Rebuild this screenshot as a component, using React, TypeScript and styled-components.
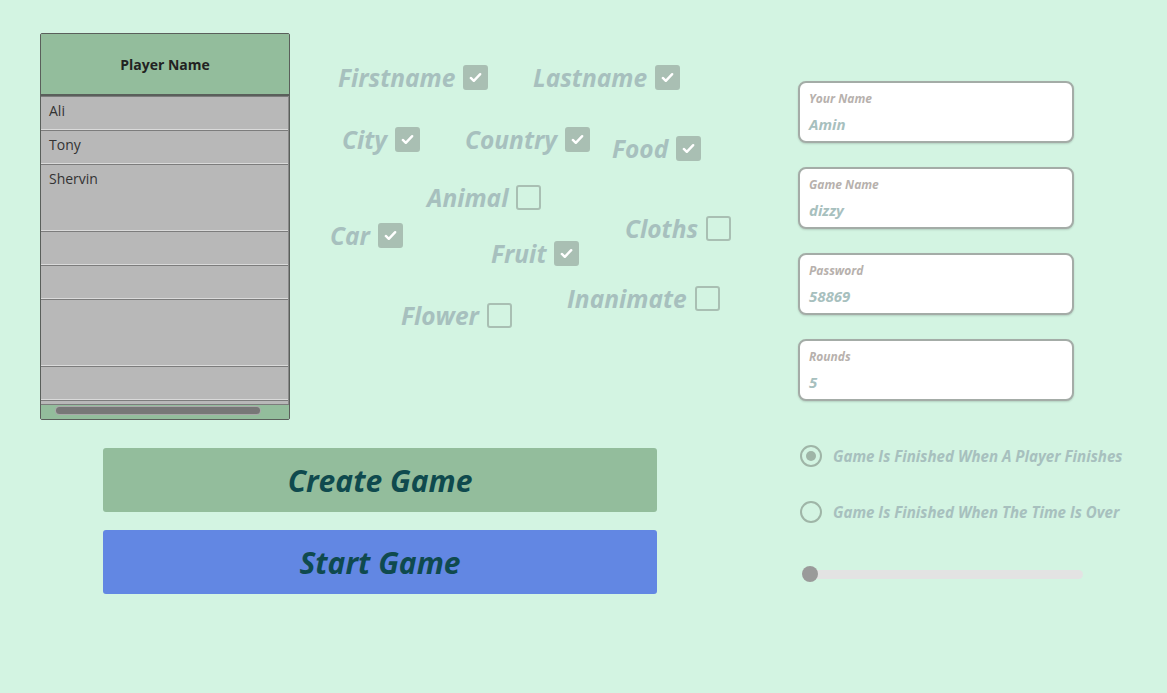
import React from 'react';
import styled, { createGlobalStyle } from 'styled-components';

const GlobalStyle = createGlobalStyle`
  html, body {
    margin: 0;
    padding: 0;
    background: #d3f4e2;
    font-family: "Open Sans", "Noto Sans", sans-serif;
  }
  * { box-sizing: border-box; }
`;

const Page = styled.div`
  display: flex;
  width: 1167px;
  height: 693px;
  padding: 33px 0 0 40px;
  background: #d3f4e2;
  overflow: hidden;
`;

const Main = styled.div`
  display: flex;
  flex-direction: column;
  width: 758px;
`;

const TopRow = styled.div`
  display: flex;
  height: 387px;
`;

/* ---- player table ---- */

const Table = styled.div`
  display: flex;
  flex-direction: column;
  width: 250px;
  height: 387px;
  border: 1px solid #5a5f5b;
  border-radius: 2px;
  background: #b8b8b8;
  overflow: hidden;
`;

const TableHeader = styled.div`
  height: 62px;
  flex-shrink: 0;
  display: flex;
  align-items: center;
  justify-content: center;
  background: #93bd9c;
  border-bottom: 2px solid #5a5f5b;
  font-size: 14px;
  font-weight: 700;
  color: #222;
`;

const TableBody = styled.div`
  flex: 1;
  overflow: hidden;
  border-right: 1px solid #8a8a8a;
`;

const Row = styled.div<{ $tall?: boolean }>`
  height: ${p => (p.$tall ? 67 : 34)}px;
  padding: 3px 8px 0;
  border-top: 1px solid #7c7c7c;
  border-bottom: 1px solid #dadada;
  font-size: 14px;
  line-height: 22px;
  color: #333;
`;

const ScrollBar = styled.div`
  height: 15px;
  flex-shrink: 0;
  background: #93bd9c;
  border-top: 1px solid #7c7c7c;
  padding: 2px 29px 0 15px;
`;

const Thumb = styled.div`
  height: 7px;
  border-radius: 4px;
  background: #777;
  box-shadow: 0 0 0 1px #a9a9a9;
`;

/* ---- category checkboxes (free canvas) ---- */

const Canvas = styled.div`
  position: relative;
  flex: 1;
`;

const Category = styled.label`
  position: absolute;
  display: flex;
  align-items: center;
  gap: 8px;
  height: 26px;
  font-size: 24.5px;
  font-weight: 700;
  font-style: italic;
  color: #a7c0be;
  white-space: nowrap;
`;

const Box = styled.span<{ $checked: boolean }>`
  width: 25px;
  height: 25px;
  border-radius: 3px;
  display: flex;
  align-items: center;
  justify-content: center;
  background: ${p => (p.$checked ? '#a9bfb3' : 'transparent')};
  border: 2px solid #a9bfb3;
`;

const Check = () => (
  <svg width="15" height="15" viewBox="0 0 16 16">
    <path d="M3 8.5l3.2 3L13 4.5" fill="none" stroke="#fff" strokeWidth="2.6" strokeLinecap="round" strokeLinejoin="round" />
  </svg>
);

/* ---- action buttons ---- */

const Actions = styled.div`
  display: flex;
  flex-direction: column;
  gap: 18px;
  width: 554px;
  margin: 28px 0 0 63px;
`;

const ActionButton = styled.button<{ $color: string }>`
  height: 64px;
  border: none;
  border-radius: 3px;
  background: ${p => p.$color};
  color: #0f4a4e;
  font-family: "Open Sans", "Noto Sans", sans-serif;
  font-size: 30px;
  font-weight: 700;
  font-style: italic;
  cursor: pointer;
`;

/* ---- side panel ---- */

const Side = styled.div`
  display: flex;
  flex-direction: column;
  padding-top: 48px;
`;

const Fields = styled.div`
  display: flex;
  flex-direction: column;
  gap: 24px;
`;

const Field = styled.div`
  width: 276px;
  height: 62px;
  padding: 8px 9px 0;
  background: #fff;
  border: 2px solid #a4aca7;
  border-radius: 8px;
  box-shadow: 0 1px 2px rgba(0, 0, 0, 0.15);
`;

const FieldLabel = styled.div`
  font-size: 12px;
  font-weight: 700;
  font-style: italic;
  color: #b7b1ad;
  line-height: 16px;
`;

const FieldValue = styled.div`
  margin-top: 7px;
  font-size: 15px;
  font-weight: 700;
  font-style: italic;
  color: #a7c0be;
  line-height: 20px;
`;

const Radios = styled.div`
  display: flex;
  flex-direction: column;
  gap: 34px;
  margin-top: 44px;
`;

const RadioRow = styled.div`
  display: flex;
  align-items: center;
  gap: 11px;
  height: 22px;
  padding-left: 2px;
`;

const RadioCircle = styled.span<{ $on: boolean }>`
  width: 22px;
  height: 22px;
  border-radius: 50%;
  border: 2px solid #9fb5a7;
  display: flex;
  align-items: center;
  justify-content: center;
  &::after {
    content: '';
    width: 10px;
    height: 10px;
    border-radius: 50%;
    background: ${p => (p.$on ? '#9fb5a7' : 'transparent')};
  }
`;

const RadioLabel = styled.span`
  font-size: 15.1px;
  font-weight: 700;
  font-style: italic;
  color: #a7c0be;
`;

const Slider = styled.div`
  position: relative;
  width: 280px;
  height: 9px;
  margin: 47px 0 0 5px;
  border-radius: 5px;
  background: #e3e3e3;
`;

const SliderThumb = styled.span`
  position: absolute;
  left: -1px;
  top: -4px;
  width: 16px;
  height: 16px;
  border-radius: 50%;
  background: #9a9a9a;
`;

const players: { name: string; tall?: boolean }[] = [
  { name: 'Ali' },
  { name: 'Tony' },
  { name: 'Shervin', tall: true },
  { name: '' },
  { name: '' },
  { name: '', tall: true },
  { name: '' },
  { name: '' },
];

const categories = [
  { label: 'Firstname', x: 48, y: 31, on: true },
  { label: 'Lastname', x: 243, y: 31, on: true },
  { label: 'City', x: 52, y: 93, on: true },
  { label: 'Country', x: 175, y: 93, on: true },
  { label: 'Food', x: 322, y: 102, on: true },
  { label: 'Animal', x: 137, y: 151, on: false },
  { label: 'Cloths', x: 335, y: 182, on: false },
  { label: 'Car', x: 40, y: 189, on: true },
  { label: 'Fruit', x: 201, y: 207, on: true },
  { label: 'Inanimate', x: 277, y: 252, on: false },
  { label: 'Flower', x: 111, y: 269, on: false },
];

const fields = [
  { label: 'Your Name', value: 'Amin' },
  { label: 'Game Name', value: 'dizzy' },
  { label: 'Password', value: '58869' },
  { label: 'Rounds', value: '5' },
];

export default function App() {
  return (
    <>
      <GlobalStyle />
      <Page>
        <Main>
          <TopRow>
            <Table>
              <TableHeader>Player Name</TableHeader>
              <TableBody>
                {players.map((p, i) => (
                  <Row key={i} $tall={p.tall}>{p.name}</Row>
                ))}
              </TableBody>
              <ScrollBar>
                <Thumb />
              </ScrollBar>
            </Table>
            <Canvas>
              {categories.map(c => (
                <Category key={c.label} style={{ left: c.x, top: c.y }}>
                  {c.label}
                  <Box $checked={c.on}>{c.on && <Check />}</Box>
                </Category>
              ))}
            </Canvas>
          </TopRow>
          <Actions>
            <ActionButton $color="#93bd9c">Create Game</ActionButton>
            <ActionButton $color="#6287e3">Start Game</ActionButton>
          </Actions>
        </Main>
        <Side>
          <Fields>
            {fields.map(f => (
              <Field key={f.label}>
                <FieldLabel>{f.label}</FieldLabel>
                <FieldValue>{f.value}</FieldValue>
              </Field>
            ))}
          </Fields>
          <Radios>
            <RadioRow>
              <RadioCircle $on />
              <RadioLabel>Game Is Finished When A Player Finishes</RadioLabel>
            </RadioRow>
            <RadioRow>
              <RadioCircle $on={false} />
              <RadioLabel>Game Is Finished When The Time Is Over</RadioLabel>
            </RadioRow>
          </Radios>
          <Slider>
            <SliderThumb />
          </Slider>
        </Side>
      </Page>
    </>
  );
}
